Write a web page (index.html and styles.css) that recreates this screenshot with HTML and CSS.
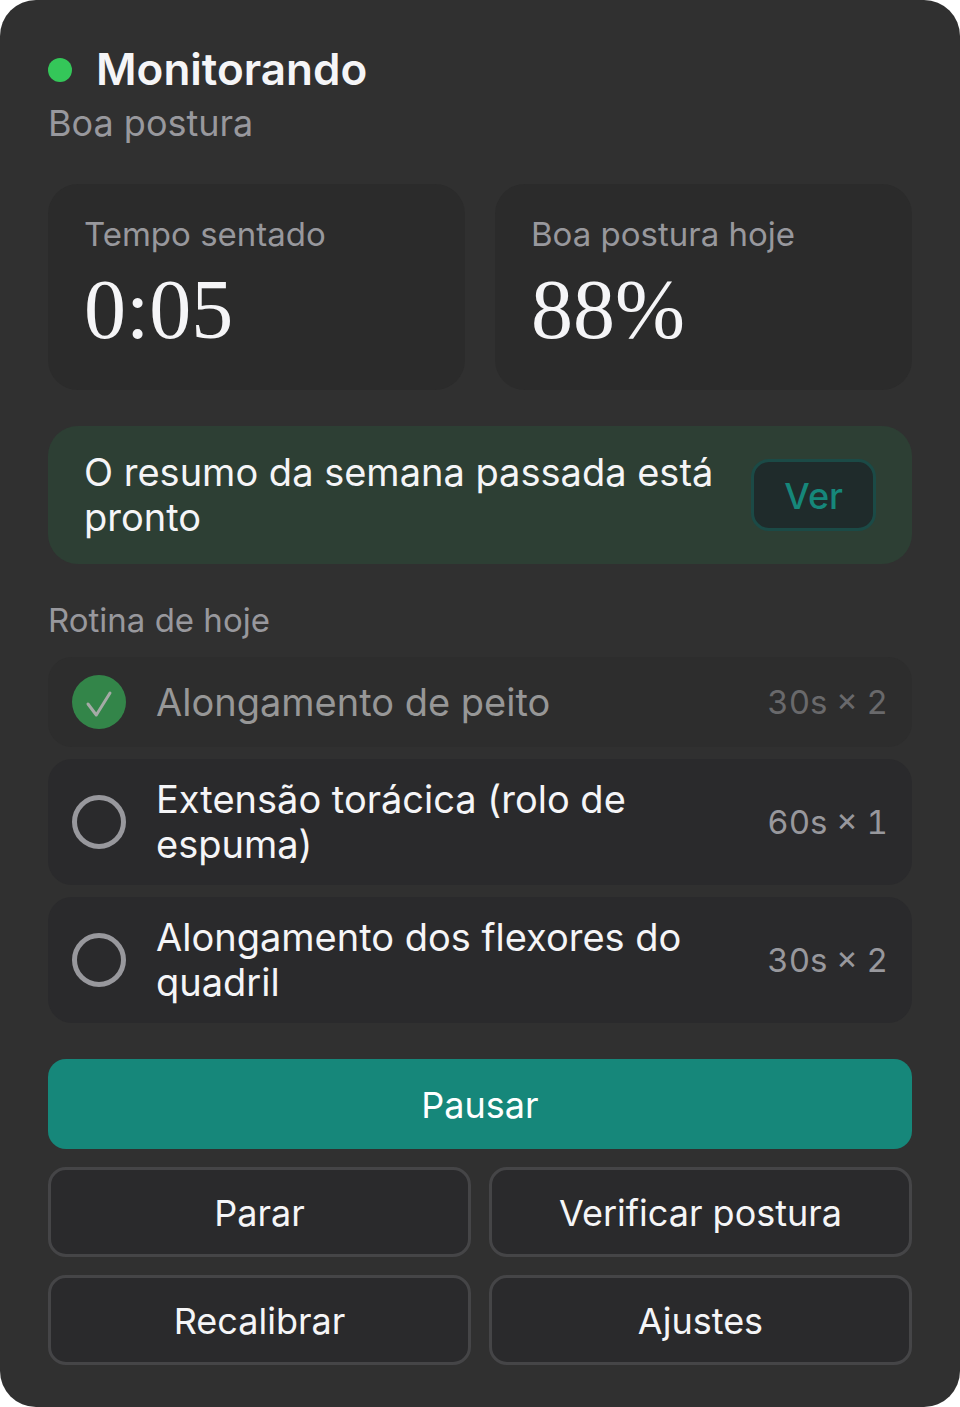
FILE: index.html
```
<!DOCTYPE html>
<html lang="pt-BR">
<head>
    <meta charset="UTF-8">
    <meta name="viewport" content="width=device-width, initial-scale=1.0">
    <title>Monitorando</title>
    <link rel="stylesheet" href="styles.css">
</head>
<body>
    <main class="panel">
        <header class="status">
            <div class="status-row">
                <span class="status-dot"></span>
                <h1>Monitorando</h1>
            </div>
            <p>Boa postura</p>
        </header>

        <section class="stats">
            <div class="stat">
                <div class="stat-label">Tempo sentado</div>
                <div class="stat-value">0:05</div>
            </div>
            <div class="stat">
                <div class="stat-label">Boa postura hoje</div>
                <div class="stat-value">88%</div>
            </div>
        </section>

        <section class="banner">
            <p>O resumo da semana passada está pronto</p>
            <button class="btn-view" type="button">Ver</button>
        </section>

        <section class="routine">
            <h2>Rotina de hoje</h2>
            <ul>
                <li class="item done">
                    <span class="check">
                        <input type="checkbox" id="peito" checked>
                        <svg viewBox="0 0 54 54" aria-hidden="true"><path d="M16 29 L24.300 40 L38 18"/></svg>
                    </span>
                    <label for="peito">Alongamento de peito</label>
                    <span class="dose">30s × 2</span>
                </li>
                <li class="item">
                    <span class="check">
                        <input type="checkbox" id="toracica">
                    </span>
                    <label for="toracica">Extensão torácica (rolo de espuma)</label>
                    <span class="dose">60s × 1</span>
                </li>
                <li class="item">
                    <span class="check">
                        <input type="checkbox" id="quadril">
                    </span>
                    <label for="quadril">Alongamento dos flexores do quadril</label>
                    <span class="dose">30s × 2</span>
                </li>
            </ul>
        </section>

        <section class="actions">
            <button class="btn primary" type="button">Pausar</button>
            <button class="btn" type="button">Parar</button>
            <button class="btn" type="button">Verificar postura</button>
            <button class="btn" type="button">Recalibrar</button>
            <button class="btn" type="button">Ajustes</button>
        </section>
    </main>
</body>
</html>
```
FILE: styles.css
```
* {
    box-sizing: border-box;
}

body {
    margin: 0;
    background: #fff;
    color: #f5f5f7;
    font-family: Inter, "Liberation Sans", sans-serif;
    font-optical-sizing: none;
}

h1, h2, p, ul {
    margin: 0;
    padding: 0;
}

button {
    font-family: inherit;
    cursor: pointer;
}

.panel {
    display: flex;
    flex-direction: column;
    gap: 36px;
    padding: 42px 48px;
    background: #303030;
    border-radius: 36px;
}

/* status */
.status {
    padding-bottom: 2px;
}

.status-row {
    display: flex;
    align-items: center;
    gap: 24px;
    margin-bottom: 4px;
}

.status-dot {
    width: 24px;
    height: 24px;
    border-radius: 50%;
    background: #34c759;
}

.status h1 {
    font-size: 44px;
    font-weight: 600;
    line-height: 55px;
}

.status p {
    color: #98989d;
    font-size: 36px;
    line-height: 45px;
}

/* cards */
.stats {
    display: grid;
    grid-template-columns: 1fr 1fr;
    gap: 30px;
}

.stat {
    padding: 30px 36px 24px;
    background: #2b2b2b;
    border-radius: 30px;
}

.stat-label {
    color: #98989d;
    font-size: 33px;
    line-height: 40px;
}

.stat-value {
    font-family: "Liberation Serif", serif;
    font-size: 84px;
    line-height: 112px;
}

/* weekly summary */
.banner {
    display: flex;
    align-items: center;
    justify-content: space-between;
    gap: 24px;
    padding: 24px 36px;
    background: #2d3f34;
    border-radius: 30px;
    font-size: 38px;
    line-height: 45px;
}

.btn-view {
    flex: none;
    height: 72px;
    padding: 2px 30px 0;
    border: 3px solid #1b4a46;
    border-radius: 18px;
    background: #1f2b2b;
    color: #16877a;
    font-size: 36px;
    font-weight: 500;
}

/* routine */
.routine h2 {
    margin-bottom: 16px;
    color: #98989d;
    font-size: 33px;
    font-weight: 400;
    line-height: 41px;
}

.routine ul {
    display: flex;
    flex-direction: column;
    gap: 12px;
    list-style: none;
}

.item {
    display: flex;
    align-items: center;
    gap: 30px;
    padding: 18px 24px;
    background: #2a2a2c;
    border-radius: 24px;
}

.item label {
    flex: 1;
    font-size: 38px;
    line-height: 45px;
}

.dose {
    margin-left: 30px;
    color: #98989d;
    font-size: 33px;
    font-variant-numeric: tabular-nums;
    white-space: nowrap;
}

.item.done {
    background: #2d2d2d;
}

.done label {
    color: #979797;
}

.done .dose {
    color: #69696b;
}

.check {
    position: relative;
    width: 54px;
    height: 54px;
}

.check input {
    display: block;
    appearance: none;
    width: 54px;
    height: 54px;
    margin: 0;
    border: 5px solid #98989d;
    border-radius: 50%;
}

.check input:checked {
    border: none;
    background: #338549;
}

.check svg {
    position: absolute;
    inset: 0;
    fill: none;
    stroke: #a5aaa6;
    stroke-width: 3;
    stroke-linecap: round;
    stroke-linejoin: round;
    pointer-events: none;
}

/* buttons */
.actions {
    display: grid;
    grid-template-columns: 1fr 1fr;
    gap: 18px;
}

.btn {
    height: 90px;
    padding: 2px 12px 0;
    border: 3px solid #454547;
    border-radius: 18px;
    background: #2a2a2c;
    color: #f5f5f7;
    font-size: 36px;
}

.btn.primary {
    grid-column: 1 / -1;
    border: none;
    background: #16877a;
    color: #fff;
}
```
